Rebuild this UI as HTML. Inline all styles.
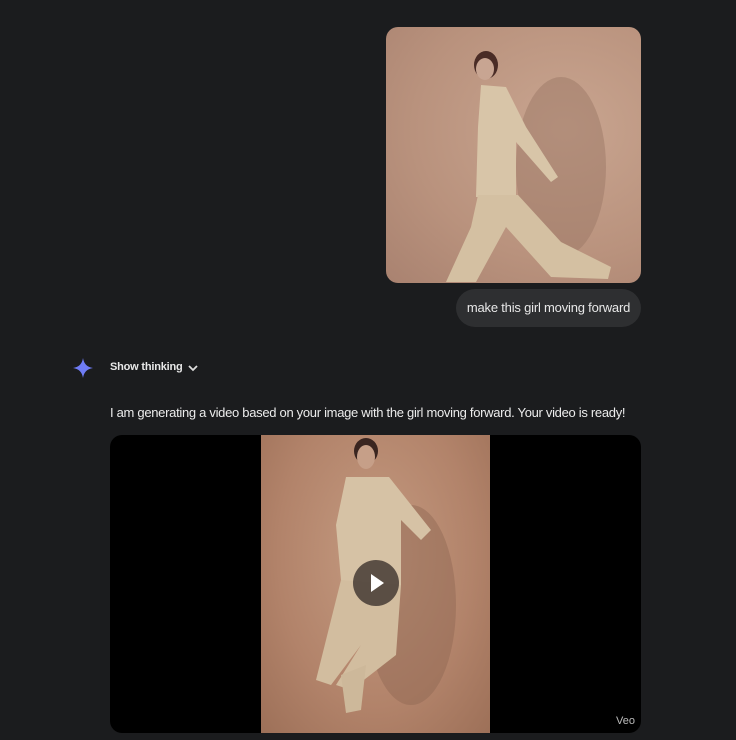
<!DOCTYPE html>
<html><head><style>
body{margin:0;width:736px;height:740px;background:#1b1c1e;font-family:"Liberation Sans",sans-serif;color:#e3e3e3;position:relative;overflow:hidden}
.a{position:absolute;white-space:nowrap}
</style></head><body>
<div class="a" style="left:386px;top:27px;width:255px;height:256px;border-radius:12px;overflow:hidden;background:radial-gradient(ellipse at 70% 40%,#c9a590,#b9927d 60%,#a98270)">
<svg width="255" height="256" viewBox="0 0 255 256">
<ellipse cx="175" cy="140" rx="45" ry="90" fill="#9c7866" opacity=".5"/>
<ellipse cx="100" cy="38" rx="12" ry="14" fill="#4a2c26"/>
<ellipse cx="99" cy="42" rx="9" ry="11" fill="#c8a592"/>
<path d="M95 58 L120 60 L140 100 L172 150 L165 155 L130 115 L130 170 L90 170 L92 100 Z" fill="#d8c5a8"/>
<path d="M92 168 L132 168 L175 215 L225 240 L222 252 L165 250 L120 200 L90 255 L60 255 L85 200 Z" fill="#d4c0a2"/>
</svg></div>
<div class="a" style="left:456px;top:289px;width:185px;height:38px;border-radius:19px;background:#2e2f31;font-size:13px;letter-spacing:-0.2px;line-height:38px;text-align:center;color:#e8e8e8">make this girl moving forward</div>
<svg class="a" style="left:73px;top:358px" width="20" height="20" viewBox="0 0 20 20"><path d="M10 0 C11 6 14 9 20 10 C14 11 11 14 10 20 C9 14 6 11 0 10 C6 9 9 6 10 0Z" fill="#6f7cf5"/></svg>
<div class="a" style="left:110px;top:361px;font-size:11px;font-weight:bold;letter-spacing:-0.2px;color:#e8e8e8">Show thinking</div>
<svg class="a" style="left:187px;top:363px" width="12" height="10" viewBox="0 0 12 10"><path d="M2 3 L6 7 L10 3" stroke="#ddd" stroke-width="1.8" fill="none"/></svg>
<div class="a" style="left:110px;top:405px;font-size:13px;letter-spacing:-0.3px;color:#ececec">I am generating a video based on your image with the girl moving forward. Your video is ready!</div>
<div class="a" style="left:110px;top:435px;width:531px;height:298px;border-radius:12px;background:#000;overflow:hidden">
<div class="a" style="left:151px;top:0;width:229px;height:298px;background:radial-gradient(ellipse at 50% 40%,#c49a80,#b2836a 60%,#9d7058)">
<svg width="229" height="298" viewBox="0 0 229 298">
<ellipse cx="150" cy="170" rx="45" ry="100" fill="#8e6551" opacity=".45"/>
<ellipse cx="105" cy="16" rx="12" ry="13" fill="#3a2520"/>
<ellipse cx="105" cy="22" rx="9" ry="12" fill="#c69f88"/>
<path d="M85 42 L128 42 L170 95 L160 105 L140 85 L140 150 L110 160 L80 145 L75 90 Z" fill="#d6c2a5"/>
<path d="M80 145 L140 150 L135 220 L90 255 L75 250 L100 210 L70 250 L55 245 Z" fill="#d2bd9f"/>
<path d="M80 240 L105 230 L100 275 L85 278 Z" fill="#cdb89a"/>
</svg></div>
<div class="a" style="left:243px;top:125px;width:46px;height:46px;border-radius:50%;background:rgba(60,50,45,.8)"></div>
<svg class="a" style="left:259px;top:138px" width="16" height="20" viewBox="0 0 16 20"><path d="M2 1 L15 10 L2 19Z" fill="#fff"/></svg>
<div class="a" style="left:506px;top:280px;font-size:11px;color:#bbb">Veo</div>
</div>
</body></html>
